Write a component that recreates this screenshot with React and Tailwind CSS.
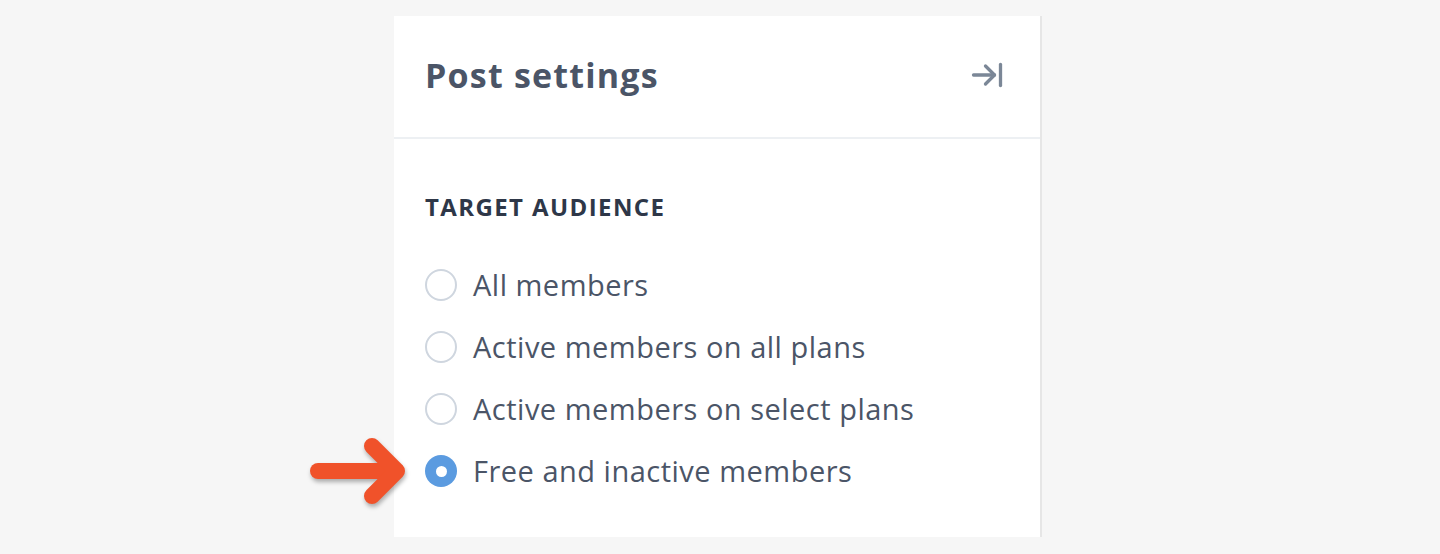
import { ArrowRightToLine } from 'lucide-react'

const options = [
  { label: 'All members', checked: false },
  { label: 'Active members on all plans', checked: false },
  { label: 'Active members on select plans', checked: false },
  { label: 'Free and inactive members', checked: true },
]

const Radio = ({ checked }) =>
  checked ? (
    <span className="w-8 h-8 rounded-full bg-[#5b9be0] flex items-center justify-center shrink-0">
      <span className="w-[11px] h-[11px] rounded-full bg-white" />
    </span>
  ) : (
    <span className="w-8 h-8 rounded-full border-2 border-[#cfd6df] bg-white shrink-0" />
  )

const Pointer = () => (
  <svg className="absolute left-[-125px] top-1/2 -translate-y-1/2 drop-shadow-[1px_3px_2px_rgba(0,0,0,0.3)]" width="110" height="80" viewBox="0 0 110 80">
    <g stroke="#f0522a" strokeWidth="16" strokeLinecap="round" strokeLinejoin="round" fill="none">
      <path d="M18 40H96" />
      <path d="M72 15L97 40L72 65" />
    </g>
  </svg>
)

export default function App() {
  return (
    <div className="min-h-[554px] bg-[#f6f6f6] pt-4 pl-[394px] font-['Open_Sans',sans-serif]">
      <div className="w-[648px] h-[521px] bg-white border-r-2 border-[#e6e6e6]">
        <header className="h-[123px] px-[31px] flex items-center justify-between border-b-2 border-[#edf0f3]">
          <h1 className="text-[34px] leading-[40px] font-bold text-[#4b5567] tracking-[1.2px] -mt-1">Post settings</h1>
          <ArrowRightToLine className="w-9 h-9 text-[#7b8797] mr-1 -mt-1" strokeWidth={2.2} />
        </header>
        <section className="px-[31px] pt-[52px]">
          <h2 className="text-[24px] leading-[31px] font-bold uppercase tracking-[1.4px] text-[#2e3748]">Target audience</h2>
          <ul className="mt-[47px] flex flex-col gap-[30px]">
            {options.map((option, index) => (
              <li key={index} className="relative flex items-center gap-4 h-8">
                {option.checked && <Pointer />}
                <Radio checked={option.checked} />
                <span className="text-[29px] leading-8 tracking-[0.5px] text-[#4b5567]">{option.label}</span>
              </li>
            ))}
          </ul>
        </section>
      </div>
    </div>
  )
}
